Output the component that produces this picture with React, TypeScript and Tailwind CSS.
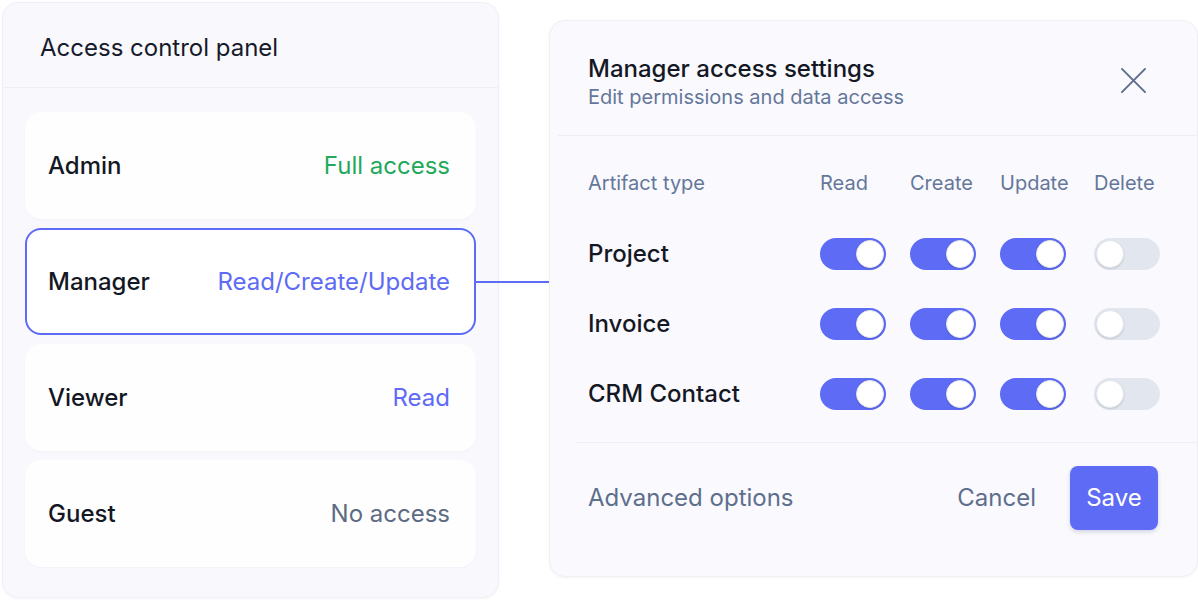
import React from 'react';

type Role = { name: string; access: string; tone: string; active?: boolean };

const roles: Role[] = [
  { name: 'Admin', access: 'Full access', tone: 'text-[#22a95c]' },
  { name: 'Manager', access: 'Read/Create/Update', tone: 'text-[#5e6bf5]', active: true },
  { name: 'Viewer', access: 'Read', tone: 'text-[#5e6bf5]' },
  { name: 'Guest', access: 'No access', tone: 'text-[#5d6b83]' },
];

const artifacts = [
  { name: 'Project', perms: [true, true, true, false] },
  { name: 'Invoice', perms: [true, true, true, false] },
  { name: 'CRM Contact', perms: [true, true, true, false] },
];

const Toggle: React.FC<{ on: boolean }> = ({ on }) => (
  <div
    className={`flex h-[32px] w-[66px] items-center rounded-full p-[2px] ${
      on ? 'justify-end bg-[#5e6bf5]' : 'justify-start bg-[#e2e7ef]'
    }`}
  >
    <div className="h-[28px] w-[28px] rounded-full border border-[#e5e7eb] bg-white shadow-[0_1px_2px_rgba(15,23,42,0.15)]" />
  </div>
);

const App: React.FC = () => {
  return (
    <div
      className="flex h-[600px] w-[1198px] overflow-hidden bg-white"
      style={{ fontFamily: 'Inter, "Noto Sans", sans-serif' }}
    >
      {/* Left: role list */}
      <div className="ml-[2px] mt-[2px] flex h-[596px] w-[497px] shrink-0 flex-col rounded-2xl border border-[#eff0f7] bg-[#f8f8fd] shadow-[0_1px_3px_rgba(30,41,80,0.04)]">
        <div className="flex h-[85px] items-center border-b border-[#eceff6] pl-[37px] pt-[6px]">
          <h1 className="text-[24px] leading-8 text-[#161b2b]">Access control panel</h1>
        </div>
        <div className="flex flex-col gap-[9px] px-[22px] pt-[24px]">
          {roles.map((r) => (
            <div
              key={r.name}
              className={`flex h-[107px] items-center justify-between rounded-2xl pl-[21px] pr-[24px] text-[24px] ${
                r.active
                  ? 'border-2 border-[#5e6bf5] bg-white'
                  : 'border-2 border-transparent bg-[#fefeff] shadow-[0_1px_2px_rgba(30,41,80,0.03)]'
              }`}
            >
              <span className="font-medium text-[#141824]">{r.name}</span>
              <span className={r.tone}>{r.access}</span>
            </div>
          ))}
        </div>
      </div>

      {/* Connector from the selected card to the settings panel */}
      <div className="relative ml-[-23px] mt-[281px] h-[1.5px] w-[73px] shrink-0 bg-[#5e6bf5]" />

      {/* Right: settings */}
      <div className="mt-[20px] flex h-[557px] w-[649px] shrink-0 flex-col overflow-hidden rounded-2xl border border-[#eef0f6] bg-[#faf9fe] shadow-[0_1px_3px_rgba(30,41,80,0.05)]">
        <div className="flex h-[114px] items-center justify-between pl-[38px] pr-[50px] pt-[6px]">
          <div>
            <h2 className="text-[24px] font-medium leading-8 text-[#141824]">Manager access settings</h2>
            <p className="text-[20px] leading-6 text-[#64779a]">Edit permissions and data access</p>
          </div>
          <svg width="27" height="27" viewBox="0 0 28 28" fill="none" stroke="#5d6f8c" strokeWidth="2" strokeLinecap="round" className="mt-[-2px]">
            <path d="M2 2L26 26M26 2L2 26" />
          </svg>
        </div>
        <div className="ml-[8px] h-px bg-[#eceff6]" />

        <div className="pl-[38px] pt-[30px]">
          <div className="grid h-[34px] grid-cols-[232px_90px_90px_94px_1fr] items-center text-[20px] text-[#64779a]">
            <span>Artifact type</span>
            <span>Read</span>
            <span>Create</span>
            <span>Update</span>
            <span>Delete</span>
          </div>
          <div className="mt-[36px] flex flex-col gap-[38px]">
            {artifacts.map((a) => (
              <div key={a.name} className="grid h-[32px] grid-cols-[232px_90px_90px_94px_1fr] items-center">
                <span className="text-[24px] font-medium text-[#141824]">{a.name}</span>
                {a.perms.map((p, i) => (
                  <Toggle key={i} on={p} />
                ))}
              </div>
            ))}
          </div>
        </div>

        <div className="ml-[27px] mt-[34px] h-px bg-[#eceff6]" />

        <div className="flex items-center justify-between pl-[38px] pr-[39px] pt-[23px]">
          <button className="text-[24px] text-[#5d6f8c]">Advanced options</button>
          <div className="flex items-center gap-[34px]">
            <button className="text-[24px] text-[#5d6f8c]">Cancel</button>
            <button className="h-[64px] w-[88px] rounded-lg bg-[#5e6bf5] text-[24px] text-white shadow-[0_2px_4px_rgba(40,50,120,0.18)]">
              Save
            </button>
          </div>
        </div>
      </div>
    </div>
  );
};

export default App;
